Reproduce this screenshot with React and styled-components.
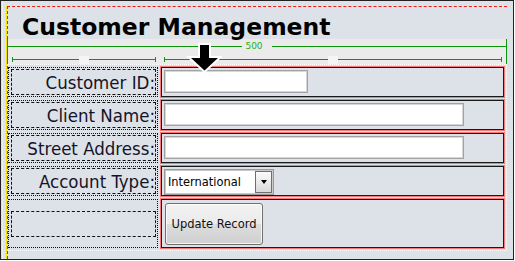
import React from "react";
import styled, { createGlobalStyle } from "styled-components";

const GlobalStyle = createGlobalStyle`
  body {
    margin: 0;
    background: #fff;
  }
`;

const green = "#0b960b";

const Frame = styled.div`
  position: relative;
  box-sizing: border-box;
  width: 514px;
  height: 260px;
  border: 1px solid #222;
  padding: 5px 0 0 6px;
  overflow: hidden;
  background: linear-gradient(to right, transparent 1px, #eceef2 1px, #eceef2 2px, transparent 2px), #dde1e8;
`;

const Canvas = styled.div`
  box-sizing: border-box;
  width: 500px;
  height: 253px;
  border-top: 1px dashed #ee1c1c;
  border-left: 1px dashed #ee1c1c;
  box-shadow: -1px 0 0 #f4e300;
`;

const Title = styled.h1`
  box-sizing: border-box;
  height: 32px;
  margin: 0;
  padding: 7px 0 0 14px;
  font: bold 23.5px/26px "DejaVu Sans", sans-serif;
  color: #000;
  white-space: nowrap;
`;

const Ruler = styled.div`
  box-sizing: border-box;
  display: flex;
  flex-direction: column;
  width: 500px;
  height: 25px;
  margin-left: -1px;
  border-left: 1px solid ${green};
  border-right: 1px solid ${green};
  background: #ebebeb;
`;

const TotalRow = styled.div`
  display: flex;
  align-items: center;
  height: 15px;
`;

const Line = styled.div`
  flex: 1;
  height: 1px;
  background: ${green};
`;

const WidthLabel = styled.span`
  padding: 0 9px 0 3px;
  font: 9px/15px "DejaVu Sans", sans-serif;
  color: #19b219;
`;

const SegRow = styled.div`
  display: flex;
  gap: 8px;
  padding: 3px 0 0 4px;
`;

const Segment = styled.div`
  box-sizing: border-box;
  display: flex;
  align-items: center;
  width: ${(p) => p.$w}px;
  height: 5px;
  border-left: 1px solid ${green};
  border-right: 1px solid ${green};
`;

const SegGap = styled.div`
  flex: none;
  width: 10px;
  height: 8px;
  background: #f5f5f5;
`;

const Table = styled.div`
  box-sizing: border-box;
  display: grid;
  grid-template-columns: 150px 343px;
  grid-template-rows: repeat(4, 30px) 49px;
  gap: 3px;
  width: 499px;
  padding: 2px 2px 2px 0;
  border: 1px dotted #fff;
  border-left: none;
`;

const LabelCell = styled.div`
  box-sizing: border-box;
  display: flex;
  align-items: center;
  padding: 2px 1px 2px 2px;
  border: 1px dotted #111;
`;

const FieldLabel = styled.div`
  box-sizing: border-box;
  flex: 1;
  height: 26px;
  padding-top: 1px;
  border: 1px dashed #111;
  text-align: right;
  font: 18.5px/23px "DejaVu Sans Condensed", "DejaVu Sans", sans-serif;
  color: #141428;
  white-space: nowrap;
`;

const FieldCell = styled.div`
  box-sizing: border-box;
  display: flex;
  align-items: ${(p) => (p.$center ? "center" : "flex-start")};
  padding: 2px;
  border: 1px solid #1a1a1a;
  outline: 1px solid #f47b7b;
`;

const TextInput = styled.input`
  box-sizing: border-box;
  width: ${(p) => p.$w}px;
  height: 23px;
  margin: 0;
  padding: 0 3px;
  border: 1px solid #a3a3a3;
  box-shadow: inset 0 0 0 1px #d6d6d6;
  background: #fff;
  outline: none;
`;

const SelectBox = styled.div`
  box-sizing: border-box;
  display: flex;
  width: 110px;
  height: 26px;
  padding: 1px;
  border: 1px solid #9a9a9a;
  box-shadow: inset 0 0 0 1px #c9c9c9;
  background: #fff;
`;

const SelectText = styled.span`
  flex: 1;
  padding-left: 2px;
  font: 12.7px/22px "DejaVu Sans Condensed", "DejaVu Sans", sans-serif;
  color: #000;
`;

const DropButton = styled.div`
  box-sizing: border-box;
  display: flex;
  align-items: center;
  justify-content: center;
  width: 17px;
  border: 1px solid #6e6e6e;
  background: linear-gradient(#fbfbfb, #d9d9d9);

  &::after {
    content: "";
    border-left: 3px solid transparent;
    border-right: 3px solid transparent;
    border-top: 4px solid #000;
  }
`;

const UpdateButton = styled.button`
  box-sizing: border-box;
  width: 98px;
  height: 42px;
  margin: 0 0 0 1px;
  padding: 0;
  border: 1px solid #707070;
  border-radius: 3px;
  background: linear-gradient(#f2f2f2 0%, #ebebeb 50%, #dddddd 50%, #cfcfcf 100%);
  box-shadow: inset 0 0 0 1px rgba(255, 255, 255, 0.75);
  font: 12.8px "DejaVu Sans Condensed", "DejaVu Sans", sans-serif;
  color: #111;
`;

const Arrow = styled.svg`
  position: absolute;
  left: 185px;
  top: 40px;
`;

const RulerSegment = ({ w }) => (
  <Segment $w={w}>
    <Line />
    <SegGap />
    <Line />
  </Segment>
);

const rows = [
  { label: "Customer ID:", field: <TextInput $w={144} /> },
  { label: "Client Name:", field: <TextInput $w={300} /> },
  { label: "Street Address:", field: <TextInput $w={300} /> },
  {
    label: "Account Type:",
    field: (
      <SelectBox>
        <SelectText>International</SelectText>
        <DropButton />
      </SelectBox>
    ),
  },
];

export default function App() {
  return (
    <>
      <GlobalStyle />
      <Frame>
        <Canvas>
          <Title>Customer Management</Title>
          <Ruler>
            <TotalRow>
              <Line />
              <WidthLabel>500</WidthLabel>
              <Line />
            </TotalRow>
            <SegRow>
              <RulerSegment w={144} />
              <RulerSegment w={338} />
            </SegRow>
          </Ruler>
          <Table>
            {rows.map((r) => (
              <React.Fragment key={r.label}>
                <LabelCell>
                  <FieldLabel>{r.label}</FieldLabel>
                </LabelCell>
                <FieldCell>{r.field}</FieldCell>
              </React.Fragment>
            ))}
            <LabelCell>
              <FieldLabel />
            </LabelCell>
            <FieldCell $center>
              <UpdateButton>Update Record</UpdateButton>
            </FieldCell>
          </Table>
        </Canvas>
        <Arrow width="36" height="34" viewBox="0 0 36 34">
          <polygon
            points="14,4 23,4 23,17 32,17 18.5,29.5 5,17 14,17"
            fill="#000"
            stroke="#fff"
            strokeWidth="4"
            strokeLinejoin="miter"
            paintOrder="stroke fill"
          />
        </Arrow>
      </Frame>
    </>
  );
}
